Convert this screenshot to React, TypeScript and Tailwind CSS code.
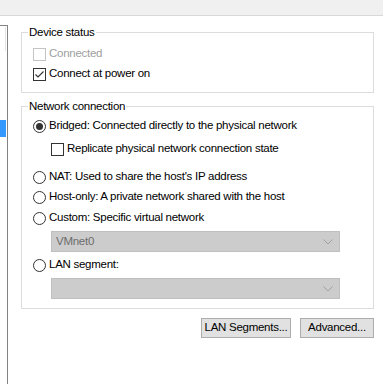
import React from 'react';

const font = { fontFamily: '"Liberation Sans", Arial, sans-serif' };

const Check: React.FC<{ checked?: boolean; disabled?: boolean }> = ({ checked, disabled }) => (
  <span
    className={`w-[13px] h-[13px] shrink-0 border bg-white flex items-center justify-center ${
      disabled ? 'border-[#c4c4c4]' : 'border-[#333333]'
    }`}
  >
    {checked && (
      <svg width="11" height="11" viewBox="0 0 11 11">
        <path d="M1.5 5.5 L4 8 L9.5 2.5" fill="none" stroke="#333333" strokeWidth="1.1" />
      </svg>
    )}
  </span>
);

const Radio: React.FC<{ checked?: boolean }> = ({ checked }) => (
  <span className="w-[13px] h-[13px] shrink-0 rounded-full border border-[#333333] bg-white flex items-center justify-center">
    {checked && <span className="w-[7px] h-[7px] rounded-full bg-[#333333]" />}
  </span>
);

const Row: React.FC<{ children: React.ReactNode; className?: string }> = ({ children, className }) => (
  <div className={`h-[20px] flex items-center gap-[3px] whitespace-nowrap ${className ?? ''}`}>{children}</div>
);

const Combo: React.FC<{ value?: string }> = ({ value }) => (
  <div className="ml-[30px] w-[289px] h-[21px] bg-[#cccccc] border border-[#bfbfbf] flex items-center justify-between pl-[4px] pr-[6px]">
    <span className="text-[#6d6d6d]">{value}</span>
    <svg width="10" height="6" viewBox="0 0 10 6">
      <path d="M0.5 0.5 L5 5 L9.5 0.5" fill="none" stroke="#a0a0a0" strokeWidth="1" />
    </svg>
  </div>
);

const GroupBox: React.FC<{ title: string; className?: string; children: React.ReactNode }> = ({
  title,
  className,
  children,
}) => (
  <div className={`relative border border-[#dcdcdc] ${className ?? ''}`}>
    <span className="absolute left-[6px] top-[-10px] bg-white px-[1px] leading-[18px]">{title}</span>
    {children}
  </div>
);

export default function App() {
  return (
    <div
      className="w-[383px] h-[384px] bg-white text-[11.5px] tracking-[-0.27px] text-black overflow-hidden flex flex-col"
      style={font}
    >
      {/* title strip */}
      <div className="h-[16px] bg-[#f0f0f0] border-b border-[#d9d9d9] shrink-0" />

      <div className="flex flex-1">
        {/* left list edge */}
        <div className="w-[8px] mt-[9px] border-t border-r border-[#828282] flex flex-col">
          <div className="w-[6px] h-[24px] mt-[1px] border-r border-[#e3e3e3]" />
          <div className="w-[6px] h-[17px] mt-[69px] bg-[#3399ff]" />
        </div>

        <div className="flex-1 pl-[13px] pr-[9px] pt-[16px] flex flex-col">
          <GroupBox title="Device status" className="h-[61px] pl-[11px] pt-[11px]">
            <Row>
              <Check disabled />
              <span className="text-[#a0a0a0]">Connected</span>
            </Row>
            <Row>
              <Check checked />
              <span>Connect at power on</span>
            </Row>
          </GroupBox>

          <GroupBox title="Network connection" className="mt-[13px] h-[203px] pl-[11px] pt-[9px]">
            <Row>
              <Radio checked />
              <span>Bridged: Connected directly to the physical network</span>
            </Row>
            <Row className="mt-[3px] pl-[18px]">
              <Check />
              <span>Replicate physical network connection state</span>
            </Row>
            <Row className="mt-[8px]">
              <Radio />
              <span>NAT: Used to share the host's IP address</span>
            </Row>
            <Row>
              <Radio />
              <span>Host-only: A private network shared with the host</span>
            </Row>
            <Row className="mt-[1px]">
              <Radio />
              <span>Custom: Specific virtual network</span>
            </Row>
            <div className="mt-[3px] -ml-[12px]">
              <Combo value="VMnet0" />
            </div>
            <Row className="mt-[3px]">
              <Radio />
              <span>LAN segment:</span>
            </Row>
            <div className="mt-[3px] -ml-[12px]">
              <Combo />
            </div>
          </GroupBox>

          <div className="mt-[9px] flex justify-end gap-[9px]">
            <button className="w-[90px] h-[20px] bg-[#e1e1e1] border border-[#adadad] leading-none whitespace-nowrap">
              LAN Segments...
            </button>
            <button className="w-[74px] h-[20px] bg-[#e1e1e1] border border-[#adadad] leading-none whitespace-nowrap">
              Advanced...
            </button>
          </div>
        </div>
      </div>
    </div>
  );
}
